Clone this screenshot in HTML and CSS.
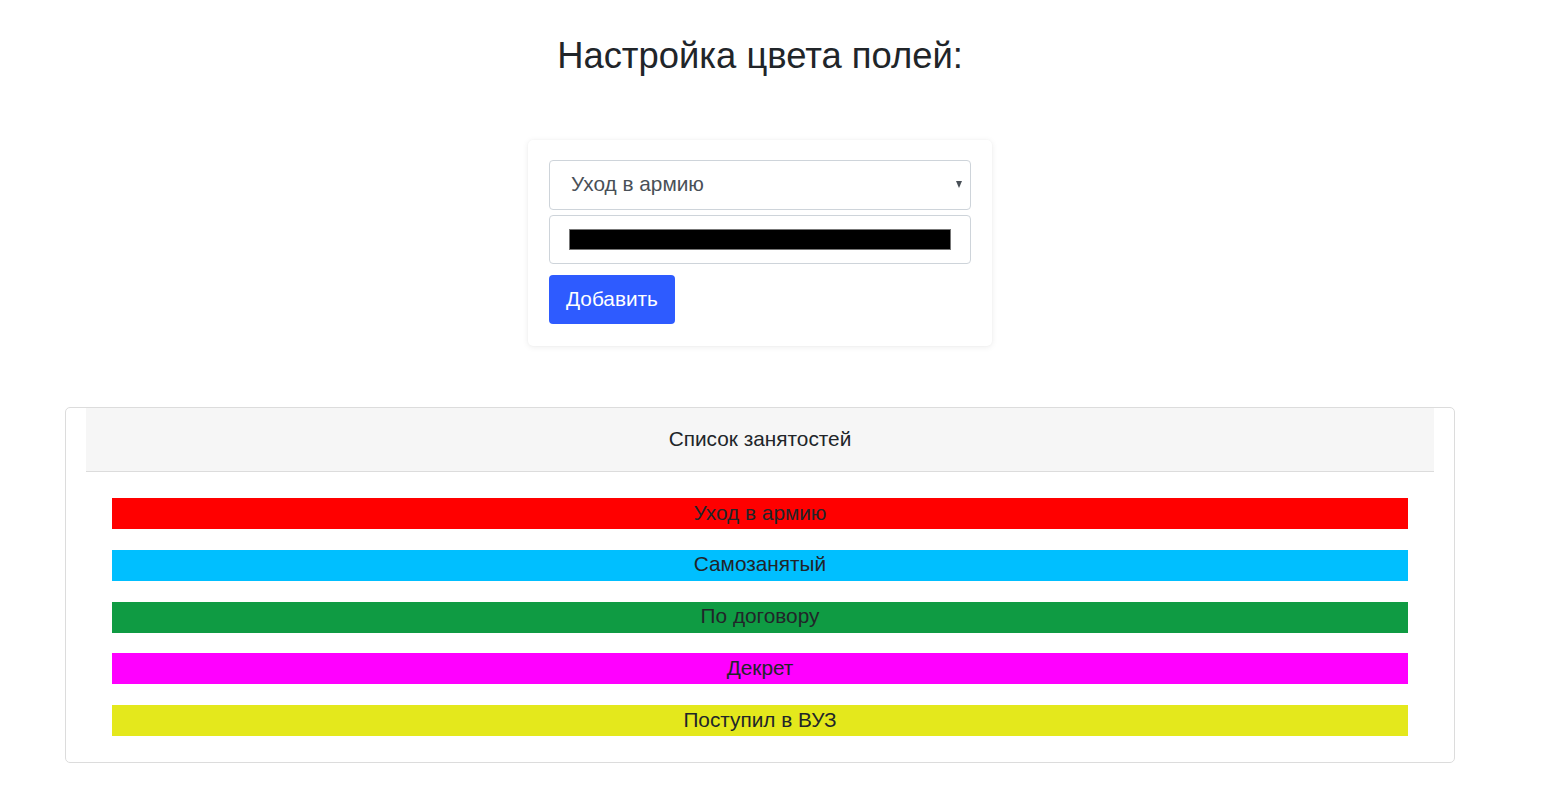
FILE: index.html
```html
<!DOCTYPE html>
<html lang="ru">
<head>
<meta charset="utf-8">
<title>Настройка цвета полей</title>
<link rel="stylesheet" href="styles.css">
</head>
<body>
<main class="page">
  <h1 class="title">Настройка цвета полей:</h1>

  <form class="form-card">
    <div class="select-wrap">
      <select class="field field-select">
        <option>Уход в армию</option>
        <option>Самозанятый</option>
        <option>По договору</option>
        <option>Декрет</option>
        <option>Поступил в ВУЗ</option>
      </select>
      <span class="select-arrow"></span>
    </div>
    <div class="field field-color">
      <span class="swatch"></span>
    </div>
    <button type="button" class="btn">Добавить</button>
  </form>

  <section class="list-card">
    <div class="list-header">Список занятостей</div>
    <div class="list-body">
      <div class="bar bar-red">Уход в армию</div>
      <div class="bar bar-blue">Самозанятый</div>
      <div class="bar bar-green">По договору</div>
      <div class="bar bar-magenta">Декрет</div>
      <div class="bar bar-yellow">Поступил в ВУЗ</div>
    </div>
  </section>
</main>
</body>
</html>
```

FILE: styles.css
```css
* { box-sizing: border-box; }

html, body {
  margin: 0;
  padding: 0;
  background: #fff;
}

body {
  font-family: "Liberation Sans", Arial, sans-serif;
  color: #212529;
}

.page {
  width: 1520px;
  display: flex;
  flex-direction: column;
  align-items: center;
  padding-top: 33px;
}

.title {
  margin: 0;
  font-size: 36.4px;
  font-weight: 400;
  line-height: 45px;
  color: #212529;
}

.form-card {
  margin-top: 62px;
  width: 464px;
  padding: 20px 21px 22px;
  background: #fff;
  border-radius: 5px;
  box-shadow: 0 1px 6px rgba(0, 0, 0, 0.08), 0 0 2px rgba(0, 0, 0, 0.04);
  display: flex;
  flex-direction: column;
  align-items: flex-start;
}

.select-wrap {
  position: relative;
  width: 100%;
}

.field {
  width: 100%;
  height: 50px;
  border: 1px solid #ced4da;
  border-radius: 4px;
  background: #fff;
}

.field-select {
  display: block;
  appearance: none;
  -webkit-appearance: none;
  font-family: inherit;
  font-size: 20.8px;
  color: #495057;
  padding: 0 40px 4px 21px;
  outline: none;
}

.select-arrow {
  position: absolute;
  right: 9px;
  top: 21px;
  width: 0;
  height: 0;
  border-left: 3.5px solid transparent;
  border-right: 3.5px solid transparent;
  border-top: 7px solid #495057;
}

.field-color {
  margin-top: 5px;
  height: 49px;
  padding: 13px 19px 13px 19px;
  display: flex;
}

.swatch {
  flex: 1;
  background: #000;
  border: 1px solid #777;
}

.btn {
  margin-top: 11px;
  height: 49px;
  padding: 0 17px 2px;
  border: none;
  border-radius: 4px;
  background: #2e5bff;
  color: #fff;
  font-family: inherit;
  font-size: 20.8px;
}

.list-card {
  margin-top: 61px;
  width: 1390px;
  border: 1px solid #dcdcdc;
  border-radius: 5px;
  padding: 0 20px 26px;
}

.list-header {
  height: 64px;
  padding-bottom: 2px;
  background: #f6f6f6;
  border-bottom: 1px solid #dcdcdc;
  display: flex;
  align-items: center;
  justify-content: center;
  font-size: 20.8px;
  color: #212529;
}

.list-body {
  padding: 26px 26px 0;
  display: flex;
  flex-direction: column;
  gap: 20.75px;
}

.bar {
  height: 31px;
  padding-bottom: 2px;
  display: flex;
  align-items: center;
  justify-content: center;
  font-size: 20.8px;
  color: #212529;
}

.bar-red { background: #ff0000; }
.bar-blue { background: #00bfff; }
.bar-green { background: #0f9b43; }
.bar-magenta { background: #ff00ff; }
.bar-yellow { background: #e4e81c; }
```
